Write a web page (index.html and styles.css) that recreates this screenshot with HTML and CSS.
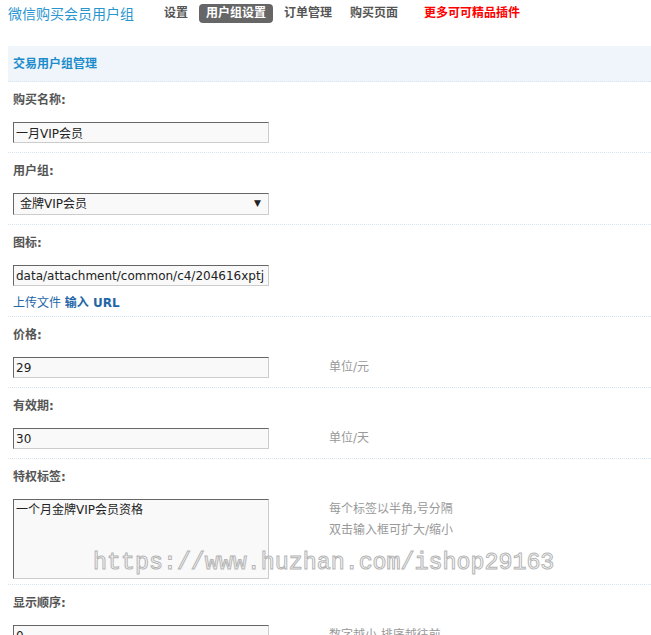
FILE: index.html
```html
<!DOCTYPE html>
<html lang="zh-CN">
<head>
<meta charset="UTF-8">
<title>微信购买会员用户组</title>
<link rel="stylesheet" href="styles.css">
</head>
<body>

<div class="page">

<div class="topnav">
<span class="app-title">微信购买会员用户组</span>
<a class="nav-link">设置</a>
<a class="nav-link active">用户组设置</a>
<a class="nav-link">订单管理</a>
<a class="nav-link">购买页面</a>
<a class="nav-link more">更多可可精品插件</a>
</div>

<div class="box-head">交易用户组管理</div>

<div class="item">
<div class="item-label">购买名称:</div>
<div class="item-body">
<div><input class="txt" type="text" value="一月VIP会员"></div>
<div class="tips"></div>
</div>
</div>

<div class="item">
<div class="item-label">用户组:</div>
<div class="item-body">
<div><span class="select-wrap"><select class="sel"><option>金牌VIP会员</option></select></span></div>
<div class="tips"></div>
</div>
</div>

<div class="item">
<div class="item-label">图标:</div>
<div class="item-body short">
<div>
<input class="txt" type="text" value="data/attachment/common/c4/204616xptj">
<div class="upload"><a>上传文件</a> <a class="strong">输入 URL</a></div>
</div>
<div class="tips"></div>
</div>
</div>

<div class="item">
<div class="item-label">价格:</div>
<div class="item-body">
<div><input class="txt" type="text" value="29"></div>
<div class="tips">单位/元</div>
</div>
</div>

<div class="item">
<div class="item-label">有效期:</div>
<div class="item-body">
<div><input class="txt" type="text" value="30"></div>
<div class="tips">单位/天</div>
</div>
</div>

<div class="item">
<div class="item-label">特权标签:</div>
<div class="item-body short">
<div><textarea class="tarea">一个月金牌VIP会员资格</textarea></div>
<div class="tips">每个标签以半角,号分隔<br>双击输入框可扩大/缩小</div>
</div>
</div>

<div class="item">
<div class="item-label">显示顺序:</div>
<div class="item-body">
<div><input class="txt" type="text" value="0"></div>
<div class="tips">数字越小 排序越往前</div>
</div>
</div>

<div class="watermark">https://www.huzhan.com/ishop29163</div>

</div>

</body>
</html>
```

FILE: styles.css
```css
body{
margin:0;
font-family:"DejaVu Sans","Noto Sans CJK SC",sans-serif;
font-size:12px;
color:#444;
background:#fff;
overflow:hidden;
}

.page{
position:relative;
padding-left:8px;
}

/* top menu */
.topnav{
display:flex;
align-items:center;
height:26px;
margin-bottom:20px;
}

.app-title{
font-size:14px;
color:#2a96cf;
margin-right:23px;
}

.nav-link{
font-weight:bold;
color:#555;
padding:2px 7px;
margin-right:4px;
line-height:15px;
border-radius:4px;
cursor:pointer;
}

.nav-link.active{
background:#666;
color:#fff;
}

.nav-link.more{
color:#f00;
margin-left:8px;
}

/* section header */
.box-head{
height:33px;
padding:2px 0 0 5px;
line-height:33px;
background:#eff5fb;
border-bottom:1px dotted #d6e4ef;
color:#1c8ccc;
font-weight:bold;
}

/* form rows */
.item{
border-bottom:1px dotted #d6e4ef;
}

.item-label{
padding:10px 5px 9px;
line-height:16px;
font-weight:bold;
color:#555;
}

.item-body{
display:grid;
grid-template-columns:316px 1fr;
padding:5px 0 9px 5px;
}

.item-body.short{
padding-bottom:5px;
}

.txt,
.sel,
.tarea{
display:block;
box-sizing:border-box;
width:256px;
margin:0;
padding:0 2px;
border:1px solid;
border-color:#666 #ccc #ccc #666;
background:#f9f9f9;
font-family:"DejaVu Sans","Noto Sans CJK SC",sans-serif;
font-size:12px;
color:#222;
outline:none;
}

.txt{
height:21px;
}

.sel{
height:22px;
padding-left:6px;
appearance:none;
-webkit-appearance:none;
border-radius:0;
}

.select-wrap{
position:relative;
display:block;
width:256px;
}

.select-wrap::after{
content:"\25BC";
position:absolute;
right:8px;
top:5px;
font-size:9px;
color:#222;
pointer-events:none;
}

.tarea{
height:80px;
padding:2px 2px;
resize:none;
line-height:16px;
}

.upload{
margin-top:9px;
line-height:16px;
}

.upload a{
color:#2366a8;
cursor:pointer;
}

.upload a.strong{
font-weight:bold;
}

.tips{
color:#999;
line-height:21px;
}

/* site stamp laid over the form */
.watermark{
position:absolute;
left:93px;
top:543px;
font-family:"Liberation Mono",monospace;
font-size:23.3px;
line-height:40px;
color:rgba(255,255,255,0.4);
-webkit-text-stroke:1px #b4b4b4;
pointer-events:none;
white-space:nowrap;
}
```
